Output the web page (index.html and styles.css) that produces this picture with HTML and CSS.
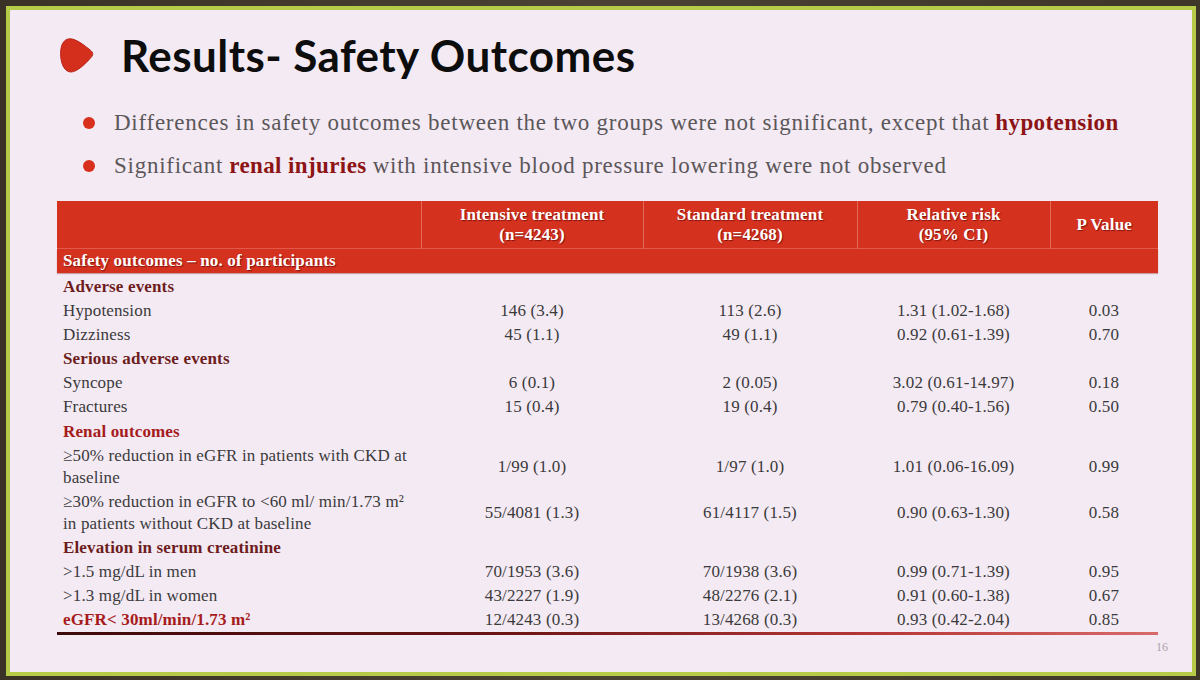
FILE: index.html
```html
<!DOCTYPE html>
<html lang="en">
<head>
<meta charset="utf-8">
<title>Results- Safety Outcomes</title>
<link rel="stylesheet" href="styles.css">
</head>
<body>
<div class="frame">
  <div class="slide">
    <header class="title-row">
      <svg class="title-mark" viewBox="0 0 34 35" width="34" height="35" aria-hidden="true">
        <path d="M10 0.8 C4 0.8 0.6 6.5 0.6 15.5 C0.6 26.5 5 34 11 34 C17 34 26 25.5 31.4 19 C33.6 16.5 33 14.2 30.4 12.2 C24 7 16 0.8 10 0.8 Z" fill="#d42e1c" stroke="#b8261a" stroke-width="1"/>
      </svg>
      <h1>Results- Safety Outcomes</h1>
    </header>
    <ul class="points">
      <li>Differences in safety outcomes between the two groups were not significant, except that <b>hypotension</b></li>
      <li>Significant <b>renal injuries</b> with intensive blood pressure lowering were not observed</li>
    </ul>
    <table class="outcomes">
      <colgroup>
        <col class="c-label"><col class="c-int"><col class="c-std"><col class="c-rr"><col class="c-p">
      </colgroup>
      <thead>
        <tr class="head-main">
          <th></th>
          <th>Intensive treatment<br>(n=4243)</th>
          <th>Standard treatment<br>(n=4268)</th>
          <th>Relative risk<br>(95% CI)</th>
          <th>P Value</th>
        </tr>
        <tr class="head-sub">
          <th colspan="5">Safety outcomes – no. of participants</th>
        </tr>
      </thead>
      <tbody>
        <tr class="group"><td class="dark">Adverse events</td><td></td><td></td><td></td><td></td></tr>
        <tr><td>Hypotension</td><td>146 (3.4)</td><td>113 (2.6)</td><td>1.31 (1.02-1.68)</td><td>0.03</td></tr>
        <tr><td>Dizziness</td><td>45 (1.1)</td><td>49 (1.1)</td><td>0.92 (0.61-1.39)</td><td>0.70</td></tr>
        <tr class="group"><td class="dark">Serious adverse events</td><td></td><td></td><td></td><td></td></tr>
        <tr><td>Syncope</td><td>6 (0.1)</td><td>2 (0.05)</td><td>3.02 (0.61-14.97)</td><td>0.18</td></tr>
        <tr><td>Fractures</td><td>15 (0.4)</td><td>19 (0.4)</td><td>0.79 (0.40-1.56)</td><td>0.50</td></tr>
        <tr class="group"><td class="bright">Renal outcomes</td><td></td><td></td><td></td><td></td></tr>
        <tr class="double"><td>≥50% reduction in eGFR in patients with CKD at<br>baseline</td><td>1/99 (1.0)</td><td>1/97 (1.0)</td><td>1.01 (0.06-16.09)</td><td>0.99</td></tr>
        <tr class="double"><td>≥30% reduction in eGFR to &lt;60 ml/ min/1.73 m²<br>in patients without CKD at baseline</td><td>55/4081 (1.3)</td><td>61/4117 (1.5)</td><td>0.90 (0.63-1.30)</td><td>0.58</td></tr>
        <tr class="group"><td class="dark">Elevation in serum creatinine</td><td></td><td></td><td></td><td></td></tr>
        <tr><td>&gt;1.5 mg/dL in men</td><td>70/1953 (3.6)</td><td>70/1938 (3.6)</td><td>0.99 (0.71-1.39)</td><td>0.95</td></tr>
        <tr><td>&gt;1.3 mg/dL in women</td><td>43/2227 (1.9)</td><td>48/2276 (2.1)</td><td>0.91 (0.60-1.38)</td><td>0.67</td></tr>
        <tr class="group"><td class="bright">eGFR&lt; 30ml/min/1.73 m²</td><td>12/4243 (0.3)</td><td>13/4268 (0.3)</td><td>0.93 (0.42-2.04)</td><td>0.85</td></tr>
      </tbody>
    </table>
    <div class="rule"></div>
    <div class="page-no">16</div>
  </div>
</div>
</body>
</html>
```
FILE: styles.css
```css
html, body {
  margin: 0;
  padding: 0;
}
body {
  width: 1200px;
  height: 680px;
  background: #433a2b;
  overflow: hidden;
}
.frame {
  padding: 6px 4px 4px 6px;
  height: 680px;
  box-sizing: border-box;
  background: linear-gradient(90deg, #3a3226, #4a4232 50%, #3e3729);
}
.slide {
  box-sizing: border-box;
  width: 1190px;
  height: 670px;
  border: 4px solid #b6cb48;
  background: #f4eaf4;
  font-family: "Liberation Serif", "Times New Roman", serif;
  color: #3a3a3a;
}
.title-row {
  display: flex;
  align-items: center;
  margin: 17px 0 0 50px;
  height: 56px;
}
.title-mark {
  display: block;
  width: 34px;
  height: 35px;
  flex: none;
}
.title-row h1 {
  margin: 0 0 0 27px;
  font-family: "Lato", "Open Sans", sans-serif;
  font-weight: 700;
  font-size: 44px;
  line-height: 56px;
  color: #0d0d0d;
  letter-spacing: 0.45px;
}
.points {
  list-style: none;
  margin: 18px 0 0 0;
  padding: 0 0 0 73px;
  font-size: 23px;
  line-height: 43px;
  letter-spacing: 0.75px;
  color: #5b5759;
}
.points li {
  display: flex;
  align-items: center;
  white-space: nowrap;
}
.points li::before {
  content: "";
  width: 12px;
  height: 12px;
  border-radius: 50%;
  background: #d9301d;
  margin: 1px 19px 0 0;
  flex: none;
}
.points b {
  color: #8c1414;
  margin-left: 6px;
  letter-spacing: 0.4px;
}
.points li:last-child b {
  margin: 0 6px;
}
.outcomes {
  margin: 14px 0 0 47px;
  width: 1101px;
  border-collapse: collapse;
  table-layout: fixed;
  font-size: 17px;
  letter-spacing: 0.15px;
}
.c-label { width: 364px; }
.c-int { width: 222px; }
.c-std { width: 214px; }
.c-rr { width: 193px; }
.c-p { width: 108px; }
.outcomes thead th {
  background: #d5311f;
  color: #fff;
  font-weight: 700;
  text-shadow: 1px 1px 1px rgba(70, 0, 0, 0.6);
  padding: 0;
}
.outcomes .head-main th {
  height: 47px;
  line-height: 20px;
  text-align: center;
  vertical-align: middle;
  border-left: 1px solid #e46a58;
}
.outcomes .head-main th:first-child {
  border-left: none;
}
.outcomes .head-sub th {
  height: 24px;
  line-height: 24px;
  text-align: left;
  padding-left: 6px;
  border-top: 1px solid #e0594a;
  box-shadow: 0 1px 1px rgba(120, 20, 10, 0.35);
}
.outcomes tbody td {
  padding: 1.05px 0;
  line-height: 22px;
  text-align: center;
  vertical-align: middle;
  color: #3b3a3b;
}
.outcomes tbody td:first-child {
  text-align: left;
  padding-left: 6px;
}
.outcomes tbody tr:first-child td {
  padding-top: 3px;
}
.dark {
  font-weight: 700;
  color: #6e1d1d !important;
}
.bright {
  font-weight: 700;
  color: #a61c1c !important;
}
.rule {
  margin: 0 0 0 47px;
  width: 1101px;
  height: 3px;
  background: linear-gradient(90deg, #3d0a0a 0%, #6a1414 40%, #b83838 75%, #d86a6a 100%);
}
.page-no {
  margin-top: 4px;
  padding-right: 24px;
  text-align: right;
  font-size: 12px;
  line-height: 16px;
  color: #aaa2aa;
}
```
